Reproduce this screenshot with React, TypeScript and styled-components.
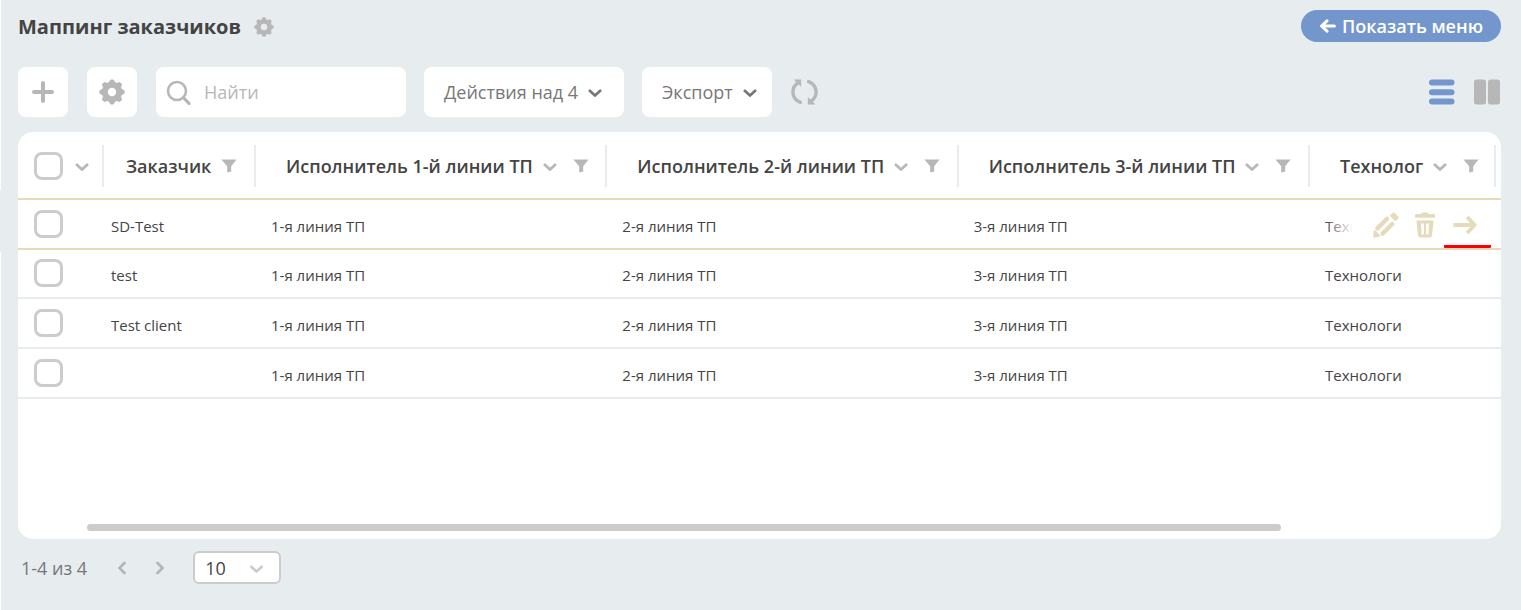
import React from "react";
import styled, { createGlobalStyle, css } from "styled-components";

const color = {
  page: "#e7edef",
  card: "#ffffff",
  text: "#444444",
  muted: "#777777",
  icon: "#b7b7b7",
  border: "#cccccc",
  gold: "#e5dab9",
  blue: "#7396cd",
  red: "#ff0000",
};

const GlobalStyle = createGlobalStyle`
  *, *::before, *::after { box-sizing: border-box; }
  body {
    margin: 0;
    background: ${color.page};
    color: ${color.text};
    font-family: "Open Sans", "Noto Sans", sans-serif;
    font-size: 18px;
  }
  button, input, select { font: inherit; color: inherit; }
  svg { display: block; flex: none; }
`;

const Shell = styled.div`
  display: flex;
  min-height: 100vh;
`;

const Edge = styled.aside`
  flex: none;
  width: 1px;
  display: grid;
  grid-template-rows: 190px 1fr;
  row-gap: 62px;

  &::before,
  &::after {
    content: "";
    background: ${color.card};
  }
`;

const Page = styled.main`
  flex: 1;
  min-width: 0;
  padding: 10px 20px 24px 17px;
`;

const TopBar = styled.header`
  display: flex;
  align-items: flex-start;
  height: 34px;
`;

const Title = styled.h1`
  margin: 0;
  font-size: 20px;
  line-height: 34px;
  font-weight: 700;
`;

const Spacer = styled.div`
  flex: 1;
`;

const IconButton = styled.button<{ $tone?: string }>`
  display: flex;
  align-items: center;
  justify-content: center;
  padding: 0;
  border: 0;
  background: none;
  color: ${(p) => p.$tone ?? color.icon};
  cursor: pointer;
`;

const TitleGear = styled(IconButton)`
  height: 34px;
  margin-left: 13px;
`;

const MenuButton = styled.button`
  display: flex;
  align-items: center;
  gap: 6px;
  height: 32px;
  padding: 0 18px;
  border: 0;
  border-radius: 16px;
  background: ${color.blue};
  color: #ffffff;
  font-weight: 600;
  white-space: nowrap;
  cursor: pointer;
`;

const Toolbar = styled.div`
  display: flex;
  align-items: center;
  gap: 18px;
  margin: 23px 0 15px;
`;

const TileButton = styled(IconButton)`
  width: 50px;
  height: 50px;
  margin-right: 1px;
  border-radius: 8px;
  background: ${color.card};
`;

const SearchBox = styled.label`
  display: flex;
  align-items: center;
  gap: 13px;
  width: 250px;
  height: 50px;
  padding-left: 10px;
  border-radius: 8px;
  background: ${color.card};
  color: ${color.icon};
`;

const SearchInput = styled.input`
  flex: 1;
  min-width: 0;
  padding: 0;
  border: 0;
  outline: 0;
  background: none;
  font-weight: 500;
  &::placeholder {
    color: ${color.icon};
    opacity: 1;
  }
`;

const DropButton = styled.button<{ $width: number }>`
  display: flex;
  align-items: center;
  gap: 10px;
  min-width: ${(p) => p.$width}px;
  height: 50px;
  padding: 0 15px 0 20px;
  border: 0;
  border-radius: 8px;
  background: ${color.card};
  color: ${color.muted};
  font-weight: 500;
  white-space: nowrap;
  cursor: pointer;
`;

const Views = styled.div`
  display: flex;
  gap: 19px;
  padding-right: 1px;
`;

const Card = styled.section`
  display: flex;
  flex-direction: column;
  min-height: 407px;
  padding-bottom: 8px;
  border-radius: 15px;
  background: ${color.card};
`;

const Table = styled.table`
  width: 100%;
  table-layout: fixed;
  border-collapse: separate;
  border-spacing: 0;
`;

const Col = styled.col<{ $w?: number }>`
  ${(p) => p.$w && `width: ${p.$w}px;`}
`;

const HeadCell = styled.th`
  height: 67px;
  padding: 0;
  text-align: left;
  font-weight: 600;
`;

const HeadInner = styled.div<{ $pad: number }>`
  display: flex;
  align-items: center;
  height: 42px;
  padding-left: ${(p) => p.$pad}px;
  border-right: 2px solid ${color.page};
  white-space: nowrap;
`;

const HeadIcons = styled.span`
  display: flex;
  align-items: center;
  gap: 16px;
  margin-left: 10px;
  color: ${color.icon};
`;

const CheckHead = styled(HeadInner)`
  gap: 12px;
  color: ${color.icon};
`;

const Cell = styled.td<{ $pad: number }>`
  position: relative;
  height: 50px;
  padding: 4px 0 0 ${(p) => p.$pad}px;
  border-bottom: 2px solid ${color.page};
  font-size: 15px;
  line-height: 20px;
  white-space: nowrap;
`;

const CheckCell = styled(Cell)`
  padding-top: 0;
`;

const Row = styled.tr<{ $active?: boolean }>`
  ${(p) =>
    p.$active &&
    css`
      ${Cell} {
        border-bottom: 0;
        box-shadow: inset 0 1px ${color.gold}, inset 0 -1px ${color.gold},
          0 -1px ${color.gold}, 0 1px ${color.gold};
      }
    `}
`;

const CheckBox = styled.input`
  appearance: none;
  display: block;
  flex: none;
  width: 29px;
  height: 28px;
  margin: 0;
  border: 3px solid ${color.border};
  border-radius: 8px;
  background: ${color.card};
  &:checked {
    background: ${color.blue};
  }
`;

const RowActions = styled.div`
  position: absolute;
  top: 3px;
  bottom: 1px;
  right: 5px;
  display: flex;
  align-items: stretch;
  padding-left: 40px;
  background: linear-gradient(to right, transparent, ${color.card} 28px);
`;

const RowAction = styled(IconButton)<{ $width: number; $marked?: boolean }>`
  width: ${(p) => p.$width}px;
  padding-top: 2px;
  padding-right: ${(p) => (p.$marked ? 6 : 0)}px;
  border-bottom: 3px solid ${(p) => (p.$marked ? color.red : "transparent")};
  border-radius: 1px;
`;

const ScrollBar = styled.div`
  height: 7px;
  margin: auto 220px 0 69px;
  border-radius: 4px;
  background: ${color.border};
`;

const Footer = styled.footer`
  display: flex;
  align-items: center;
  margin-top: 12px;
  padding-left: 3px;
  color: ${color.muted};
  font-weight: 500;
`;

const Pager = styled.nav`
  display: flex;
  gap: 30px;
  margin: 0 29px 0 31px;
`;

const SizeBox = styled.label`
  display: flex;
  align-items: center;
  position: relative;
  color: ${color.border};
  svg {
    position: absolute;
    right: 17px;
    pointer-events: none;
  }
`;

const SizeSelect = styled.select`
  appearance: none;
  width: 88px;
  height: 33px;
  padding: 0 10px;
  border: 2px solid ${color.border};
  border-radius: 6px;
  background: ${color.card};
  color: ${color.text};
  font-weight: 500;
`;

const Gear = ({ size }: { size: number }) => (
  <svg width={size} height={size} viewBox="0 0 26 26" fill="currentColor">
    <circle cx="13" cy="13" r="7.2" fill="none" stroke="currentColor" strokeWidth="6" />
    {[0, 45, 90, 135, 180, 225, 270, 315].map((a) => (
      <path key={a} d="M9 5 L10.9 1.2 Q11.2 .4 12 .4 H14 Q14.8 .4 15.1 1.2 L17 5Z" transform={`rotate(${a} 13 13)`} />
    ))}
  </svg>
);

const Chevron = ({ width = 14 }: { width?: number }) => (
  <svg width={width} height="10" viewBox="0 0 14 10" fill="none" stroke="currentColor" strokeWidth="2.7" strokeLinecap="round" strokeLinejoin="round">
    <path d="M1.8 3.8 L7 8.6 L12.2 3.8" />
  </svg>
);

const Funnel = () => (
  <svg width="16" height="14" viewBox="0 0 16 14" fill="currentColor">
    <path d="M.4 .5 H15.6 L10.2 7.2 V12.6 L6.2 13.6 V7.2Z" />
  </svg>
);

const Plus = () => (
  <svg width="22" height="22" viewBox="0 0 22 22" stroke="currentColor" strokeWidth="4" strokeLinecap="round">
    <path d="M11 2 V20 M2 11 H20" />
  </svg>
);

const Search = () => (
  <svg width="25" height="26" viewBox="0 0 25 26" fill="none" stroke="currentColor" strokeWidth="2.6" strokeLinecap="round">
    <circle cx="11" cy="12" r="9" />
    <path d="M17.4 18.6 L23.2 24.6" strokeWidth="3" />
  </svg>
);

const Refresh = () => (
  <svg width="28" height="26" viewBox="-1 0 28 26" fill="currentColor">
    {[0, 180].map((a) => (
      <g key={a} transform={`rotate(${a} 13.5 13)`}>
        <path d="M9.4 23.4 C.4 19.6 -.2 9.6 6 4.6" fill="none" stroke="currentColor" strokeWidth="3.4" strokeLinecap="round" />
        <path d="M2.6 .4 H10.2 V8 Z" />
      </g>
    ))}
  </svg>
);

const ListView = () => (
  <svg width="26" height="26" viewBox="0 0 26 26" fill="currentColor">
    <rect y="0.5" width="25.5" height="6" rx="3" />
    <rect y="10.3" width="25.5" height="6" rx="3" />
    <rect y="19.5" width="25.5" height="6" rx="3" />
  </svg>
);

const ColumnView = () => (
  <svg width="26" height="26" viewBox="0 0 26 26" fill="currentColor">
    <rect y="0.5" width="12" height="25" rx="2.5" />
    <rect x="14" y="0.5" width="12" height="25" rx="2.5" />
  </svg>
);

const Arrow = ({ back = false }: { back?: boolean }) =>
  back ? (
    <svg width="17" height="14" viewBox="0 0 17 14" fill="none" stroke="currentColor" strokeWidth="3" strokeLinecap="round" strokeLinejoin="round">
      <path d="M8 1.8 L2.5 7 L8 12.2 M3 7 H15.4" />
    </svg>
  ) : (
    <svg width="24" height="20" viewBox="0 0 24 20" fill="none" stroke="currentColor" strokeWidth="3.8" strokeLinejoin="round">
      <path d="M.5 10 H21 M14.2 2 L21.6 10 L14.2 18" />
    </svg>
  );

const Pencil = () => (
  <svg width="26" height="26" viewBox="0 0 26 26" fill="currentColor">
    <path d="M.8 18.4 Q1.6 17.8 2.4 18.5 L7 23.2 Q7.6 24 6.6 24.6 L1.4 25.8 Q.2 25.8 .2 24.6Z" />
    <path d="M4.4 16.4 L14 6.8 M9.6 21.6 L19.2 12" stroke="currentColor" strokeWidth="4.4" strokeLinecap="round" />
    <path d="M17.2 3.8 L19.6 1.2 Q20.6 .4 21.6 1.2 L25 4.6 Q25.8 5.6 25 6.6 L22.4 9Z" stroke="currentColor" strokeWidth=".6" strokeLinejoin="round" />
  </svg>
);

const Trash = () => (
  <svg width="20" height="26" viewBox="0 0 20 26" fill="currentColor">
    <path d="M6.4 2 Q6.4 .6 7.8 .6 H12.2 Q13.6 .6 13.6 2 H19 Q20 2 20 3 V5.8 H0 V3 Q0 2 1 2Z" />
    <path fillRule="evenodd" d="M1.4 8.4 H18.6 L17 23.6 Q16.7 25.4 15 25.4 H5 Q3.3 25.4 3 23.6Z M6 11.4 L6.6 22.4 H9 V11.4Z M11 11.4 V22.4 H13.4 L14 11.4Z" />
  </svg>
);

const Angle = ({ d }: { d: string }) => (
  <svg width="8" height="14" viewBox="0 0 8 14" fill="none" stroke="currentColor" strokeWidth="2.8" strokeLinecap="round" strokeLinejoin="round">
    <path d={d} />
  </svg>
);

const columns = [
  { title: "Заказчик", pad: 22, sortable: false },
  { title: "Исполнитель 1-й линии ТП", pad: 30, sortable: true },
  { title: "Исполнитель 2-й линии ТП", pad: 30, sortable: true },
  { title: "Исполнитель 3-й линии ТП", pad: 30, sortable: true },
  { title: "Технолог", pad: 30, sortable: true },
];

const clients = ["SD-Test", "test", "Test client", ""];

export default function App() {
  return (
    <>
      <GlobalStyle />
      <Shell>
        <Edge />
        <Page>
          <TopBar>
            <Title>Маппинг заказчиков</Title>
            <TitleGear aria-label="Настройки страницы"><Gear size={20} /></TitleGear>
            <Spacer />
            <MenuButton><Arrow back />Показать меню</MenuButton>
          </TopBar>

          <Toolbar>
            <TileButton aria-label="Добавить"><Plus /></TileButton>
            <TileButton aria-label="Настройки"><Gear size={26} /></TileButton>
            <SearchBox>
              <Search />
              <SearchInput type="text" placeholder="Найти" aria-label="Найти" />
            </SearchBox>
            <DropButton $width={200}>Действия над 4<Chevron /></DropButton>
            <DropButton $width={130}>Экспорт<Chevron /></DropButton>
            <IconButton aria-label="Обновить"><Refresh /></IconButton>
            <Spacer />
            <Views>
              <IconButton $tone={color.blue} aria-label="Список"><ListView /></IconButton>
              <IconButton aria-label="Колонки"><ColumnView /></IconButton>
            </Views>
          </Toolbar>

          <Card>
            <Table>
              <colgroup>
                <Col $w={86} />
                <Col $w={152} />
                <Col />
                <Col />
                <Col />
                <Col $w={186} />
                <Col $w={5} />
              </colgroup>
              <thead>
                <tr>
                  <HeadCell>
                    <CheckHead $pad={16}>
                      <CheckBox type="checkbox" aria-label="Выбрать все" />
                      <Chevron />
                    </CheckHead>
                  </HeadCell>
                  {columns.map((c) => (
                    <HeadCell key={c.title} scope="col">
                      <HeadInner $pad={c.pad}>
                        {c.title}
                        <HeadIcons>
                          {c.sortable && <Chevron />}
                          <Funnel />
                        </HeadIcons>
                      </HeadInner>
                    </HeadCell>
                  ))}
                  <HeadCell as="td" />
                </tr>
              </thead>
              <tbody>
                {clients.map((name, i) => (
                  <Row key={i} $active={i === 0}>
                    <CheckCell $pad={16}><CheckBox type="checkbox" aria-label={`Выбрать строку ${i + 1}`} /></CheckCell>
                    <Cell $pad={7}>{name}</Cell>
                    <Cell $pad={15}>1-я линия ТП</Cell>
                    <Cell $pad={15}>2-я линия ТП</Cell>
                    <Cell $pad={15}>3-я линия ТП</Cell>
                    <Cell $pad={15}>
                      Технологи
                      {i === 0 && (
                        <RowActions>
                          <RowAction $width={41} $tone={color.gold} aria-label="Изменить"><Pencil /></RowAction>
                          <RowAction $width={38} $tone={color.gold} aria-label="Удалить"><Trash /></RowAction>
                          <RowAction $width={47} $tone={color.gold} $marked aria-label="Открыть"><Arrow /></RowAction>
                        </RowActions>
                      )}
                    </Cell>
                    <Cell $pad={0} />
                  </Row>
                ))}
              </tbody>
            </Table>
            <ScrollBar />
          </Card>

          <Footer>
            <span>1-4 из 4</span>
            <Pager aria-label="Страницы">
              <IconButton aria-label="Назад"><Angle d="M6.5 2 L1.5 7 L6.5 12" /></IconButton>
              <IconButton aria-label="Вперёд"><Angle d="M1.5 2 L6.5 7 L1.5 12" /></IconButton>
            </Pager>
            <SizeBox>
              <SizeSelect aria-label="Строк на странице" defaultValue="10">
                <option>10</option>
                <option>20</option>
                <option>50</option>
              </SizeSelect>
              <Chevron width={15} />
            </SizeBox>
          </Footer>
        </Page>
      </Shell>
    </>
  );
}
